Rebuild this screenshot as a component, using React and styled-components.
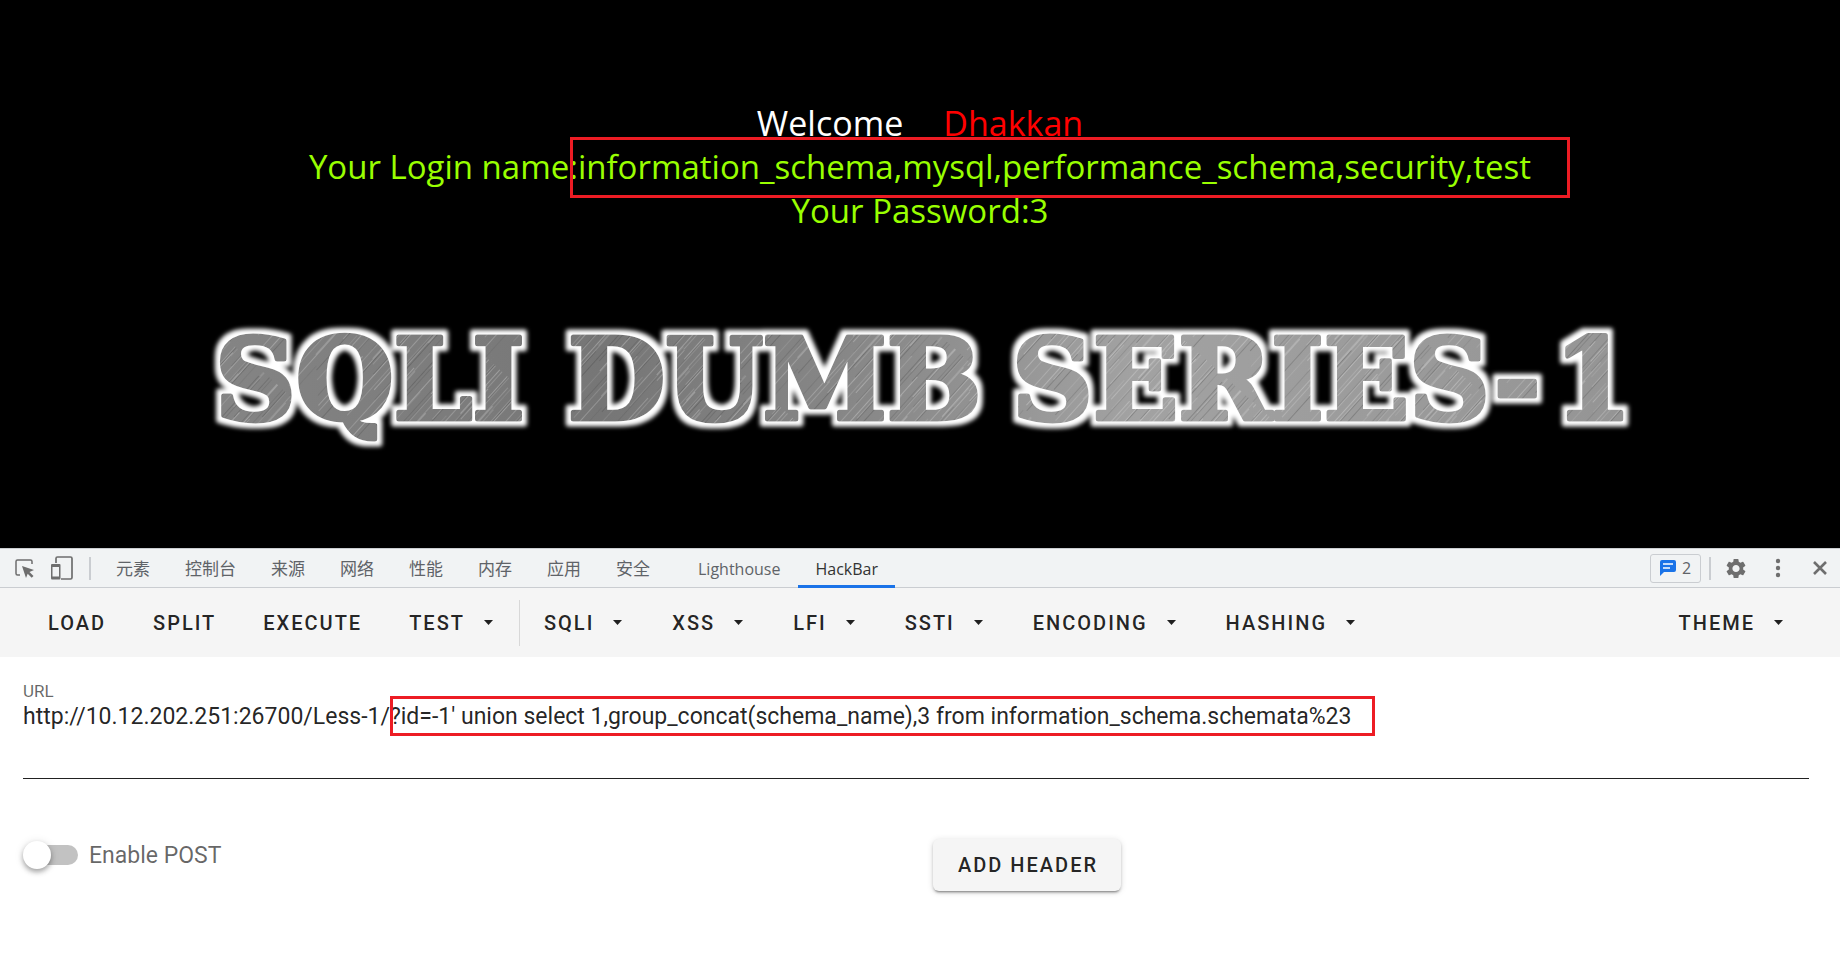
import React, { useState } from "react";
import styled, { createGlobalStyle } from "styled-components";
import { MdSettings } from "react-icons/md";

const GlobalStyle = createGlobalStyle`
  *, *::before, *::after { box-sizing: border-box; }
  body { margin: 0; background: #fff; font-family: Roboto, sans-serif; }
  button, textarea { font-family: inherit; }
`;

const Lesson = styled.main`
  background: #000;
  height: 548px;
  padding-top: 101px;
  overflow: hidden;
`;

const Message = styled.p`
  margin: 0;
  text-align: center;
  white-space: pre;
  font: 33px/44px "Open Sans", "Noto Sans", sans-serif;
  color: #99ff00;
`;

const Greeting = styled(Message)`
  font-size: 34px;
  color: #fff;
`;

const Guest = styled.span`
  margin-left: 40px;
  color: #f00;
`;

const Marked = styled.span`
  position: relative;

  &::after {
    content: "";
    position: absolute;
    inset: -7px -39px -9px -8px;
    border: 3px solid #ed1c24;
  }
`;

const Banner = styled.svg`
  display: block;
  width: 1440px;
  max-width: 100%;
  margin: 82px auto 0;
`;

const BannerText = styled.text`
  font: bold 112px "DejaVu Serif", serif;
`;

const DevBar = styled.header`
  display: flex;
  justify-content: space-between;
  height: 40px;
  padding: 0 8px 0 12px;
  background: #f1f3f4;
  border-top: 1px solid #cacdd1;
  border-bottom: 1px solid #cacdd1;
`;

const Group = styled.div`
  display: flex;
  align-items: center;
`;

const IconButton = styled.button`
  display: flex;
  align-items: center;
  justify-content: center;
  width: ${(p) => p.$width}px;
  height: 36px;
  padding: 0;
  border: 0;
  background: none;
  color: #6e6e6e;
`;

const Separator = styled.span`
  width: 2px;
  height: 23px;
  margin: ${(p) => p.$margin};
  background: #cacdd1;
`;

const Tabs = styled.nav`
  display: flex;
  gap: 1px;
  height: 39px;
  align-self: flex-start;
`;

const Tab = styled.button`
  height: 39px;
  padding: 1px 17px 0;
  margin-left: ${(p) => (p.$apart ? 13 : 0)}px;
  border: 0;
  background: none;
  box-shadow: ${(p) => (p.$active ? "inset 0 -3px #1a73e8" : "none")};
  color: ${(p) => (p.$active ? "#333" : "#5f6368")};
  font: 17px/24px "Open Sans", "Noto Sans CJK SC", sans-serif;
  white-space: nowrap;
`;

const LatinTab = styled(Tab)`
  font-size: 16px;
`;

const Issues = styled.button`
  display: flex;
  align-items: center;
  justify-content: center;
  gap: 6px;
  width: 51px;
  height: 29px;
  padding: 0;
  border: 1px solid #cacdd1;
  border-radius: 3px;
  background: none;
  color: #5f6368;
  font: 16px/24px "Open Sans", sans-serif;
`;

const HackBar = styled.nav`
  display: flex;
  align-items: center;
  height: 69px;
  padding: 0 31px 0 24px;
  background: #f5f5f5;
`;

const Action = styled.button`
  display: flex;
  align-items: center;
  gap: 19px;
  height: 50px;
  padding: 0 ${(p) => (p.$menu ? 26 : 23)}px 0 24px;
  border: 0;
  background: none;
  color: rgba(0, 0, 0, 0.87);
  font-size: 20px;
  font-weight: 500;
  letter-spacing: 2px;
  white-space: nowrap;
`;

const Rule = styled.span`
  width: 1px;
  height: 46px;
  background: #d8d8d8;
`;

const Spacer = styled.span`
  flex: 1;
`;

const Form = styled.form`
  padding: 24px 31px 40px 23px;
`;

const Field = styled.div`
  position: relative;
  border-bottom: 1px solid #212121;
`;

const FieldLabel = styled.label`
  display: block;
  color: rgba(0, 0, 0, 0.6);
  font-size: 17px;
  line-height: 20px;
`;

const UrlInput = styled.textarea`
  display: block;
  width: 100%;
  height: 77px;
  padding: 0;
  border: 0;
  outline: 0;
  resize: none;
  background: none;
  color: rgba(0, 0, 0, 0.87);
  font-size: 23px;
  line-height: 32px;
`;

const Highlight = styled.span`
  position: absolute;
  left: 367px;
  top: 15px;
  width: 985px;
  height: 40px;
  border: 3px solid #ed1c24;
  pointer-events: none;
`;

const Options = styled.div`
  display: grid;
  grid-template-columns: 1fr 1fr;
  gap: 34px;
  margin-top: 60px;
  align-items: start;
`;

const SwitchLabel = styled.label`
  display: flex;
  align-items: center;
  gap: 11px;
  height: 32px;
  color: rgba(0, 0, 0, 0.6);
  font-size: 23px;
`;

const Switch = styled.input`
  appearance: none;
  display: flex;
  align-items: center;
  width: 50px;
  height: 20px;
  margin: 0 0 0 5px;
  border-radius: 10px;
  background: #c2c2c2;

  &::before {
    content: "";
    width: 28px;
    height: 28px;
    flex: none;
    margin-left: ${(p) => (p.checked ? 22 : -5)}px;
    border-radius: 50%;
    background: #fff;
    box-shadow: 0 3px 5px rgba(0, 0, 0, 0.3), 0 1px 10px rgba(0, 0, 0, 0.12);
  }
`;

const HeaderButton = styled.button`
  justify-self: start;
  height: 52px;
  padding: 0 23px 0 25px;
  border: 0;
  border-radius: 6px;
  background: #f5f5f5;
  box-shadow: 0 3px 2px -2px rgba(0, 0, 0, 0.3), 0 2px 3px rgba(0, 0, 0, 0.18), 0 1px 7px rgba(0, 0, 0, 0.12);
  color: rgba(0, 0, 0, 0.87);
  font-size: 20px;
  font-weight: 500;
  letter-spacing: 2px;
`;

const Caret = () => (
  <svg width="9" height="5" viewBox="0 0 9 5" aria-hidden="true">
    <path d="M0 0h9L4.500 5z" fill="currentColor" />
  </svg>
);

const STREAKS = Array.from({ length: 60 }, (_, i) => ({
  y: (i * 37) % 120,
  x: (i * 83) % 160,
  length: 40 + ((i * 29) % 90),
  color: i % 3 ? "#fff" : "#333",
  opacity: 0.1 + ((i * 7) % 5) * 0.04,
}));

function MetalBanner() {
  return (
    <Banner viewBox="0 0 1440 140" role="img" aria-label="SQLI DUMB SERIES-1">
      <defs>
        <linearGradient id="steel" x1="0" x2="1" y1="0" y2="0">
          <stop offset="0" stopColor="#858585" />
          <stop offset="0.28" stopColor="#767676" />
          <stop offset="0.48" stopColor="#8a8a8a" />
          <stop offset="0.65" stopColor="#a2a2a2" />
          <stop offset="1" stopColor="#949494" />
        </linearGradient>
        <pattern id="brushed" width="1440" height="140" patternUnits="userSpaceOnUse">
          <rect width="1440" height="140" fill="url(#steel)" />
          <rect width="1440" height="140" fill="url(#streaks)" />
        </pattern>
        <pattern id="streaks" width="160" height="120" patternUnits="userSpaceOnUse" patternTransform="rotate(-48)">
          {STREAKS.map((s, i) => (
            <rect key={i} x={s.x} y={s.y} width={s.length} height="1" fill={s.color} opacity={s.opacity} />
          ))}
        </pattern>
        <filter id="glow" x="-20" y="-10" width="1480" height="160" filterUnits="userSpaceOnUse">
          <feMorphology in="SourceAlpha" operator="dilate" radius="5" result="wide" />
          <feGaussianBlur in="wide" stdDeviation="2" result="soft" />
          <feFlood floodColor="#fff" />
          <feComposite in2="soft" operator="in" result="halo" />
          <feMerge>
            <feMergeNode in="halo" />
            <feMergeNode in="SourceGraphic" />
          </feMerge>
        </filter>
      </defs>
      <BannerText y="104" fill="url(#brushed)" stroke="url(#brushed)" strokeWidth="5" strokeLinejoin="round" filter="url(#glow)">
        <tspan x="15">SQLI</tspan>
        <tspan x="368">DUMB</tspan>
        <tspan x="812">SERIES-</tspan>
        <tspan x="1354">1</tspan>
      </BannerText>
    </Banner>
  );
}

const TABS = ["元素", "控制台", "来源", "网络", "性能", "内存", "应用", "安全"];
const MENUS = ["SQLI", "XSS", "LFI", "SSTI", "ENCODING", "HASHING"];

export default function App() {
  const [url, setUrl] = useState(
    "http://10.12.202.251:26700/Less-1/?id=-1' union select 1,group_concat(schema_name),3 from information_schema.schemata%23"
  );
  const [post, setPost] = useState(false);

  return (
    <>
      <GlobalStyle />
      <Lesson>
        <Greeting>
          Welcome<Guest>Dhakkan</Guest>
        </Greeting>
        <Message>
          Your Login name:<Marked>information_schema,mysql,performance_schema,security,test</Marked>
        </Message>
        <Message>Your Password:3</Message>
        <MetalBanner />
      </Lesson>

      <DevBar>
        <Group>
          <IconButton $width={24} aria-label="Inspect element">
            <svg width="20" height="20" viewBox="0 0 20 20" fill="none">
              <path d="M18 6V3.500Q18 2 16.500 2H3.500Q2 2 2 3.500V15.500Q2 17 3.500 17H6" stroke="currentColor" strokeWidth="1.500" />
              <path d="M8 8l12 4-4.500 2 4 4-1.800 1.800-4-4L12 20z" fill="currentColor" />
            </svg>
          </IconButton>
          <IconButton $width={52} aria-label="Toggle device toolbar">
            <svg width="24" height="24" viewBox="0 0 24 24" fill="none">
              <path d="M6 7V2.500Q6 1 7.500 1H20.500Q22 1 22 2.500V21.500Q22 23 20.500 23H11" stroke="currentColor" strokeWidth="1.700" />
              <path d="M2 8h7.500q1 0 1 1v13q0 1.500-1 1.500H2q-1 0-1-1.500V9q0-1 1-1zM2.500 11v9.500h6.500v-9.500z" fill="currentColor" fillRule="evenodd" />
            </svg>
          </IconButton>
          <Separator $margin="0 8px 0 1px" />
          <Tabs>
            {TABS.map((name) => (
              <Tab key={name}>{name}</Tab>
            ))}
            <LatinTab $apart>Lighthouse</LatinTab>
            <LatinTab $active>HackBar</LatinTab>
          </Tabs>
        </Group>
        <Group>
          <Issues aria-label="2 issues">
            <svg width="16" height="16" viewBox="0 0 16 16">
              <path d="M2 0h12q2 0 2 2v8q0 2-2 2H4l-4 4V2q0-2 2-2z" fill="#1a73e8" />
              <path d="M3 4h10M3 8h7" stroke="#fff" strokeWidth="1.500" />
            </svg>
            2
          </Issues>
          <Separator $margin="0 13px 0 8px" />
          <IconButton $width={24} aria-label="Settings">
            <MdSettings size={25} />
          </IconButton>
          <IconButton $width={60} aria-label="More options">
            <svg width="6" height="20" viewBox="0 0 6 20" fill="currentColor">
              <circle cx="3" cy="3" r="2.200" />
              <circle cx="3" cy="10" r="2.200" />
              <circle cx="3" cy="17" r="2.200" />
            </svg>
          </IconButton>
          <IconButton $width={24} aria-label="Close">
            <svg width="16" height="16" viewBox="0 0 16 16" fill="none" stroke="currentColor" strokeWidth="2.600">
              <path d="M2 2l12 12M14 2L2 14" />
            </svg>
          </IconButton>
        </Group>
      </DevBar>

      <HackBar>
        <Action>LOAD</Action>
        <Action>SPLIT</Action>
        <Action>EXECUTE</Action>
        <Action $menu>
          TEST
          <Caret />
        </Action>
        <Rule />
        {MENUS.map((name) => (
          <Action key={name} $menu>
            {name}
            <Caret />
          </Action>
        ))}
        <Spacer />
        <Action $menu>
          THEME
          <Caret />
        </Action>
      </HackBar>

      <Form onSubmit={(e) => e.preventDefault()}>
        <Field>
          <FieldLabel htmlFor="url">URL</FieldLabel>
          <UrlInput id="url" spellCheck={false} value={url} onChange={(e) => setUrl(e.target.value)} />
          <Highlight />
        </Field>
        <Options>
          <SwitchLabel>
            <Switch type="checkbox" checked={post} onChange={(e) => setPost(e.target.checked)} />
            Enable POST
          </SwitchLabel>
          <HeaderButton type="button">ADD HEADER</HeaderButton>
        </Options>
      </Form>
    </>
  );
}
